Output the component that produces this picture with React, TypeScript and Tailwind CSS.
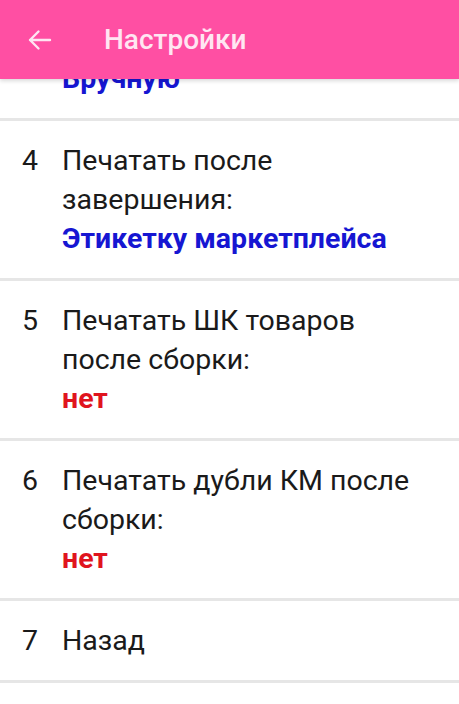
import React from "react";

type Item = { n: string; lines: string[]; value?: string; color?: "blue" | "red" };

const items: Item[] = [
  { n: "4", lines: ["Печатать после", "завершения:"], value: "Этикетку маркетплейса", color: "blue" },
  { n: "5", lines: ["Печатать ШК товаров", "после сборки:"], value: "нет", color: "red" },
  { n: "6", lines: ["Печатать дубли КМ после", "сборки:"], value: "нет", color: "red" },
  { n: "7", lines: ["Назад"] },
];

function Row({ item }: { item: Item }) {
  return (
    <div className="flex px-[22px] py-[20px] border-b-[3px] border-[#e6e6e6] text-[28.5px] leading-[39px] text-[#1a1a1a]">
      <div className="w-[40px] shrink-0">{item.n}</div>
      <div className="flex flex-col">
        {item.lines.map((l, i) => (
          <div key={i} className="whitespace-nowrap">{l}</div>
        ))}
        {item.value && (
          <div
            className={
              "font-bold whitespace-nowrap " + (item.color === "blue" ? "text-[#1616d2]" : "text-[#e0141e]")
            }
          >
            {item.value}
          </div>
        )}
      </div>
    </div>
  );
}

export default function App() {
  return (
    <div className="w-[459px] h-[704px] overflow-hidden bg-white" style={{ fontFamily: "Roboto, 'Noto Sans', sans-serif" }}>
      <div className="relative z-10 h-[79px] bg-[#ff4fa3] flex items-center shadow-[0_2px_4px_rgba(0,0,0,0.15)]">
        <svg className="ml-[27px]" width="25" height="24" viewBox="0 0 25 24" fill="none" stroke="#ffe6f2" strokeWidth="2.4" strokeLinecap="round" strokeLinejoin="round">
          <path d="M23 12H3M11.5 3.5L3 12l8.5 8.5" />
        </svg>
        <div className="ml-[52px] text-[28px] font-medium text-[#ffe6f2]">Настройки</div>
      </div>
      <div className="overflow-hidden">
        <div className="flex px-[22px] pb-[20px] border-b-[3px] border-[#e6e6e6] text-[28.5px] leading-[39px] -mt-[20px]">
          <div className="w-[40px] shrink-0"></div>
          <div className="font-bold text-[#1616d2]">Вручную</div>
        </div>
        {items.map((it) => (
          <Row key={it.n} item={it} />
        ))}
      </div>
    </div>
  );
}
